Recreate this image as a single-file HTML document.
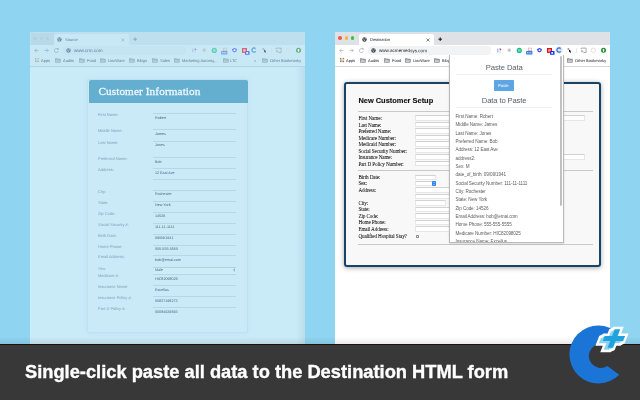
<!DOCTYPE html><html><head><meta charset='utf-8'><style>html,body{margin:0;padding:0;width:640px;height:400px;overflow:hidden;background:#8fd4f0;position:relative}.t{position:absolute;white-space:nowrap}.b{position:absolute;box-sizing:border-box}#root{position:absolute;left:0;top:0;width:640px;height:400px;overflow:hidden;will-change:transform;background:#8fd4f0}</style></head><body><div id='root'>
<div class='b' style='left:30.00px;top:32.00px;width:275.00px;height:312.00px;background:#c9eaf7'></div>
<div class='b' style='left:30.00px;top:32.00px;width:275.00px;height:13.00px;background:#bddfee'></div>
<div class='b' style='left:30.50px;top:32.50px;width:23.00px;height:12.50px;background:#b8d9e8;border-bottom-right-radius:2px'></div>
<div class='b' style='left:33.40px;top:36.55px;width:3.40px;height:3.40px;background:#b0d1df;border-radius:50%'></div>
<div class='b' style='left:39.80px;top:36.55px;width:3.40px;height:3.40px;background:#b0d1df;border-radius:50%'></div>
<div class='b' style='left:45.80px;top:36.55px;width:3.40px;height:3.40px;background:#b0d1df;border-radius:50%'></div>
<div class='b' style='left:53.50px;top:34.25px;width:75.50px;height:11.25px;background:#c8e8f5;border-radius:2px 2px 0 0'></div>
<svg class='b' style='left:57.30px;top:37.20px;' width='5' height='5' viewBox='0 0 5 5'><circle cx='2.5' cy='2.5' r='2.2' fill='#6f909e'/><path d='M1.2 1.6 Q2.6 2.2 2 3.2 Q3 3.6 3.4 4.3 M3.2 0.7 Q2.8 1.6 3.9 2' stroke='#c8e8f5' stroke-width='0.6' fill='none'/></svg>
<div class='t' style='left:65.00px;top:37.61px;font:normal 4.0px/4.0px "Liberation Sans",sans-serif;color:#5f808f;transform:rotate(0.25deg);transform-origin:0 0;'>Source</div>
<svg class='b' style='left:121.40px;top:37.50px;' width='4' height='4' viewBox='0 0 4 4'><path d='M0.5 0.5L3.5 3.5M3.5 0.5L0.5 3.5' stroke='#86a7b6' stroke-width='0.55'/></svg>
<svg class='b' style='left:133.30px;top:37.30px;' width='4.4' height='4.4' viewBox='0 0 4.4 4.4'><path d='M2.2 0.4V4M0.4 2.2H4' stroke='#86a7b6' stroke-width='0.9'/></svg>
<div class='b' style='left:30.00px;top:45.00px;width:275.00px;height:11.00px;background:#c8e8f5'></div>
<svg class='b' style='left:33.50px;top:48.30px;' width='5' height='5' viewBox='0 0 5 5'><path d='M4.5 2.5H0.8M2.5 0.7L0.7 2.5 2.5 4.3' stroke='#86a7b6' stroke-width='0.6' fill='none'/></svg>
<svg class='b' style='left:43.50px;top:48.30px;' width='5' height='5' viewBox='0 0 5 5'><path d='M0.5 2.5H4.2M2.5 0.7L4.3 2.5 2.5 4.3' stroke='#86a7b6' stroke-width='0.6' fill='none'/></svg>
<svg class='b' style='left:53.50px;top:48.00px;' width='5' height='5' viewBox='0 0 5 5'><path d='M4 1.5A2 2 0 1 0 4.3 3' stroke='#86a7b6' stroke-width='0.6' fill='none'/><path d='M3 0.6L4.4 0.6 4.4 2' stroke='#86a7b6' stroke-width='0.6' fill='none'/></svg>
<div class='b' style='left:63.10px;top:46.40px;width:122.90px;height:8.35px;background:#c4e4f2;border-radius:4px'></div>
<svg class='b' style='left:66.20px;top:48.20px;' width='5' height='5' viewBox='0 0 5 5'><circle cx='2.5' cy='2.5' r='2.2' fill='#6f909e'/><path d='M1.2 1.6 Q2.6 2.2 2 3.2 Q3 3.6 3.4 4.3 M3.2 0.7 Q2.8 1.6 3.9 2' stroke='#c4e4f2' stroke-width='0.6' fill='none'/></svg>
<div class='t' style='left:73.50px;top:49.21px;font:normal 4.6px/4.6px "Liberation Sans",sans-serif;color:#5f808f;transform:rotate(0.25deg);transform-origin:0 0;'>www.crm.com</div>
<div class='b' style='left:30.00px;top:56.00px;width:275.00px;height:10.00px;background:#c8e8f5'></div>
<div class='b' style='left:30.00px;top:66.00px;width:275.00px;height:0.60px;background:#b3d5e3'></div>
<svg class='b' style='left:34.50px;top:58.00px;' width='5' height='5' viewBox='0 0 5 5'><rect x='0.0' y='0.0' width='1.1' height='1.1' fill='#d9a0a8'/><rect x='1.5' y='0.0' width='1.1' height='1.1' fill='#d8cf90'/><rect x='3.0' y='0.0' width='1.1' height='1.1' fill='#8fc9a8'/><rect x='0.0' y='1.5' width='1.1' height='1.1' fill='#90b6e0'/><rect x='1.5' y='1.5' width='1.1' height='1.1' fill='#d9a0a8'/><rect x='3.0' y='1.5' width='1.1' height='1.1' fill='#d8cf90'/><rect x='0.0' y='3.0' width='1.1' height='1.1' fill='#8fc9a8'/><rect x='1.5' y='3.0' width='1.1' height='1.1' fill='#90b6e0'/><rect x='3.0' y='3.0' width='1.1' height='1.1' fill='#d9a0a8'/></svg>
<div class='t' style='left:41.20px;top:59.11px;font:normal 4.0px/4.0px "Liberation Sans",sans-serif;color:#5f808f;transform:rotate(0.25deg);transform-origin:0 0;'>Apps</div>
<svg class='b' style='left:55.00px;top:58.00px;' width='6' height='5' viewBox='0 0 6 5'><path d='M0.4 0.6H2.2L2.8 1.2H5.3V4.3H0.4Z' stroke='#86a7b6' stroke-width='0.6' fill='#b5d3df'/><path d='M0.4 1.9H5.3' stroke='#86a7b6' stroke-width='0.5'/></svg>
<div class='t' style='left:62.80px;top:59.11px;font:normal 4.0px/4.0px "Liberation Sans",sans-serif;color:#5f808f;transform:rotate(0.25deg);transform-origin:0 0;'>Audits</div>
<svg class='b' style='left:79.00px;top:58.00px;' width='6' height='5' viewBox='0 0 6 5'><path d='M0.4 0.6H2.2L2.8 1.2H5.3V4.3H0.4Z' stroke='#86a7b6' stroke-width='0.6' fill='#b5d3df'/><path d='M0.4 1.9H5.3' stroke='#86a7b6' stroke-width='0.5'/></svg>
<div class='t' style='left:86.80px;top:59.11px;font:normal 4.0px/4.0px "Liberation Sans",sans-serif;color:#5f808f;transform:rotate(0.25deg);transform-origin:0 0;'>Food</div>
<svg class='b' style='left:100.00px;top:58.00px;' width='6' height='5' viewBox='0 0 6 5'><path d='M0.4 0.6H2.2L2.8 1.2H5.3V4.3H0.4Z' stroke='#86a7b6' stroke-width='0.6' fill='#b5d3df'/><path d='M0.4 1.9H5.3' stroke='#86a7b6' stroke-width='0.5'/></svg>
<div class='t' style='left:107.90px;top:59.11px;font:normal 4.0px/4.0px "Liberation Sans",sans-serif;color:#5f808f;transform:rotate(0.25deg);transform-origin:0 0;'>LincWare</div>
<svg class='b' style='left:129.40px;top:58.00px;' width='6' height='5' viewBox='0 0 6 5'><path d='M0.4 0.6H2.2L2.8 1.2H5.3V4.3H0.4Z' stroke='#86a7b6' stroke-width='0.6' fill='#b5d3df'/><path d='M0.4 1.9H5.3' stroke='#86a7b6' stroke-width='0.5'/></svg>
<div class='t' style='left:137.00px;top:59.11px;font:normal 4.0px/4.0px "Liberation Sans",sans-serif;color:#5f808f;transform:rotate(0.25deg);transform-origin:0 0;'>Blogs</div>
<svg class='b' style='left:152.10px;top:58.00px;' width='6' height='5' viewBox='0 0 6 5'><path d='M0.4 0.6H2.2L2.8 1.2H5.3V4.3H0.4Z' stroke='#86a7b6' stroke-width='0.6' fill='#b5d3df'/><path d='M0.4 1.9H5.3' stroke='#86a7b6' stroke-width='0.5'/></svg>
<div class='t' style='left:160.00px;top:59.11px;font:normal 4.0px/4.0px "Liberation Sans",sans-serif;color:#5f808f;transform:rotate(0.25deg);transform-origin:0 0;'>Sales</div>
<svg class='b' style='left:174.20px;top:58.00px;' width='6' height='5' viewBox='0 0 6 5'><path d='M0.4 0.6H2.2L2.8 1.2H5.3V4.3H0.4Z' stroke='#86a7b6' stroke-width='0.6' fill='#b5d3df'/><path d='M0.4 1.9H5.3' stroke='#86a7b6' stroke-width='0.5'/></svg>
<div class='t' style='left:181.90px;top:59.11px;font:normal 4.0px/4.0px "Liberation Sans",sans-serif;color:#5f808f;transform:rotate(0.25deg);transform-origin:0 0;'>Marketing Automa...</div>
<svg class='b' style='left:222.70px;top:58.00px;' width='6' height='5' viewBox='0 0 6 5'><path d='M0.4 0.6H2.2L2.8 1.2H5.3V4.3H0.4Z' stroke='#86a7b6' stroke-width='0.6' fill='#b5d3df'/><path d='M0.4 1.9H5.3' stroke='#86a7b6' stroke-width='0.5'/></svg>
<div class='t' style='left:229.80px;top:59.11px;font:normal 4.0px/4.0px "Liberation Sans",sans-serif;color:#5f808f;transform:rotate(0.25deg);transform-origin:0 0;'>LTC</div>
<div class='t' style='left:253.80px;top:59.11px;font:normal 4.0px/4.0px "Liberation Sans",sans-serif;color:#5f808f;transform:rotate(0.25deg);transform-origin:0 0;'>»</div>
<svg class='b' style='left:262.30px;top:58.00px;' width='6' height='5' viewBox='0 0 6 5'><path d='M0.4 0.6H2.2L2.8 1.2H5.3V4.3H0.4Z' stroke='#86a7b6' stroke-width='0.6' fill='#b5d3df'/><path d='M0.4 1.9H5.3' stroke='#86a7b6' stroke-width='0.5'/></svg>
<div class='t' style='left:269.80px;top:59.11px;font:normal 4.0px/4.0px "Liberation Sans",sans-serif;color:#5f808f;transform:rotate(0.25deg);transform-origin:0 0;'>Other Bookmarks</div>
<svg class='b' style='left:188.00px;top:44.00px;' width='117' height='13' viewBox='0 0 117 13'><rect x='4' y='4.600000000000001' width='1.5' height='3.8' rx='0.6' fill='#aed2f3'/><circle cx='7.400000000000006' cy='5.399999999999999' r='0.85' fill='#cf7cab'/><path d='M5.800000000000011 4.100000000000001L7 4.899999999999999' stroke='#e0bdd5' stroke-width='0.6'/><rect x='6.199999999999989' y='7.600000000000001' width='1.8' height='0.9' fill='#a6e7de'/><path d='M16.19999999999999 4.200000000000003V8.200000000000003M14.449999999999989 5.200000000000003L17.94999999999999 7.200000000000003M14.449999999999989 7.200000000000003L17.94999999999999 5.200000000000003' stroke='#acb9be' stroke-width='0.55'/><circle cx='26.30000000000001' cy='6.399999999999999' r='2.6' fill='#5fcfb5'/><path d='M25.00000000000001 5.899999999999999H27.600000000000012M25.00000000000001 6.999999999999998H27.600000000000012' stroke='#fff' stroke-width='0.5'/><rect x='35.19999999999999' y='4.100000000000001' width='3.3' height='2.6' stroke='#dfb0b5' stroke-width='0.6' fill='none'/><rect x='33.099999999999994' y='7' width='6.3' height='3.5' rx='0.4' fill='#6aa8ea'/><path d='M34 8.799999999999997H38.5' stroke='#fff' stroke-width='0.8' stroke-dasharray='1.2 0.4'/><path d='M46.5 3.9999999999999973L48.9 5.099999999999997L48.5 7.299999999999997L46.5 8.499999999999996L44.5 7.299999999999997L44.1 5.099999999999997Z' fill='#6a83ed'/><circle cx='46.5' cy='6.299999999999997' r='1' fill='#fff'/><rect x='54' y='4' width='5' height='4.9' fill='#d9666b'/><rect x='55.19999999999999' y='5.200000000000003' width='2.6' height='2.5' fill='#e2bdc2'/><rect x='57' y='7' width='4.5' height='3.8' rx='0.4' fill='#6178ed'/><rect x='58.30000000000001' y='8.100000000000001' width='1.8' height='1.6' fill='#fff'/><path d='M67.6 4.700000000000001A2.1 2.1 0 1 0 67.7 7.300000000000002' stroke='#609fe8' stroke-width='1.2' fill='none'/><circle cx='67.7' cy='5.100000000000001' r='0.6' fill='#70d5f1'/><circle cx='75.4' cy='5' r='1' fill='#acb9be'/><path d='M75.9 5.5L78.30000000000001 7.200000000000003L77.30000000000001 7.5L78 8.600000000000001L77.5 8.899999999999999L76.80000000000001 7.799999999999997L76.19999999999999 8.399999999999999Z' fill='#505d62'/><rect x='83.30000000000001' y='4' width='0.5' height='5' fill='#cddadf'/><path d='M88.1 5.299999999999997V4.099999999999997H93.1V8.499999999999996H90.89999999999999' stroke='#909ca2' stroke-width='0.55' fill='none'/><path d='M88.1 6.299999999999997A2.2 2.2 0 0 1 90.3 8.499999999999996M88.1 7.399999999999997A1.1 1.1 0 0 1 89.19999999999999 8.499999999999996' stroke='#909ca2' stroke-width='0.5' fill='none'/><circle cx='100.30000000000001' cy='6.299999999999997' r='2.2' stroke='#d2dee4' stroke-width='0.8' fill='none'/><circle cx='110.5' cy='6.299999999999997' r='2.5' fill='#60b080'/><path d='M110.5 4.6999999999999975L112.0 6.299999999999997H111.05V7.799999999999997H109.95V6.299999999999997H109.0Z' fill='#fff'/></svg>
<div class='b' style='left:296.00px;top:66.60px;width:9.00px;height:277.40px;background:linear-gradient(to right,rgba(0,60,90,0),rgba(0,60,90,0.075))'></div>
<div class='b' style='left:86.80px;top:79.00px;width:161.60px;height:254.00px;background:#caeaf7;border:0.7px solid #c0e0ee;border-radius:2.5px;box-shadow:0 0 4px rgba(120,170,195,0.10)'></div>
<div class='b' style='left:89.00px;top:80.00px;width:159.00px;height:22.50px;background:#64aecf;border-radius:2px 2px 0 0'></div>
<div class='t' style='left:98.40px;top:85.62px;font:normal 11.2px/11.2px "Liberation Serif",serif;color:#eef8fc;letter-spacing:0.12px;-webkit-text-stroke:0.3px #eef8fc'>Customer Information</div>
<div class='t' style='left:98.00px;top:113.36px;font:normal 4.0px/4.0px "Liberation Sans",sans-serif;color:#7ea3b4;transform:rotate(0.25deg);transform-origin:0 0;'>First Name:</div>
<div class='b' style='left:153.00px;top:113.45px;width:82.50px;height:0.60px;background:#b7d7e4'></div>
<div class='t' style='left:155.00px;top:117.12px;font:normal 3.7px/3.7px "Liberation Sans",sans-serif;color:#45687b;transform:rotate(0.25deg);transform-origin:0 0;'>Robert</div>
<div class='t' style='left:98.00px;top:129.36px;font:normal 4.0px/4.0px "Liberation Sans",sans-serif;color:#7ea3b4;transform:rotate(0.25deg);transform-origin:0 0;'>Middle Name:</div>
<div class='b' style='left:153.00px;top:129.45px;width:82.50px;height:0.60px;background:#b7d7e4'></div>
<div class='t' style='left:155.00px;top:133.12px;font:normal 3.7px/3.7px "Liberation Sans",sans-serif;color:#45687b;transform:rotate(0.25deg);transform-origin:0 0;'>James</div>
<div class='t' style='left:98.00px;top:140.61px;font:normal 4.0px/4.0px "Liberation Sans",sans-serif;color:#7ea3b4;transform:rotate(0.25deg);transform-origin:0 0;'>Last Name:</div>
<div class='b' style='left:153.00px;top:140.70px;width:82.50px;height:0.60px;background:#b7d7e4'></div>
<div class='t' style='left:155.00px;top:144.37px;font:normal 3.7px/3.7px "Liberation Sans",sans-serif;color:#45687b;transform:rotate(0.25deg);transform-origin:0 0;'>Jones</div>
<div class='t' style='left:98.00px;top:157.11px;font:normal 4.0px/4.0px "Liberation Sans",sans-serif;color:#7ea3b4;transform:rotate(0.25deg);transform-origin:0 0;'>Preferred Name:</div>
<div class='b' style='left:153.00px;top:157.20px;width:82.50px;height:0.60px;background:#b7d7e4'></div>
<div class='t' style='left:155.00px;top:160.87px;font:normal 3.7px/3.7px "Liberation Sans",sans-serif;color:#45687b;transform:rotate(0.25deg);transform-origin:0 0;'>Bob</div>
<div class='t' style='left:98.00px;top:168.11px;font:normal 4.0px/4.0px "Liberation Sans",sans-serif;color:#7ea3b4;transform:rotate(0.25deg);transform-origin:0 0;'>Address:</div>
<div class='b' style='left:153.00px;top:168.20px;width:82.50px;height:0.60px;background:#b7d7e4'></div>
<div class='t' style='left:155.00px;top:171.87px;font:normal 3.7px/3.7px "Liberation Sans",sans-serif;color:#45687b;transform:rotate(0.25deg);transform-origin:0 0;'>12 East Ave</div>
<div class='b' style='left:153.00px;top:179.45px;width:82.50px;height:0.60px;background:#b7d7e4'></div>
<div class='t' style='left:98.00px;top:189.61px;font:normal 4.0px/4.0px "Liberation Sans",sans-serif;color:#7ea3b4;transform:rotate(0.25deg);transform-origin:0 0;'>City:</div>
<div class='b' style='left:153.00px;top:189.70px;width:82.50px;height:0.60px;background:#b7d7e4'></div>
<div class='t' style='left:155.00px;top:193.37px;font:normal 3.7px/3.7px "Liberation Sans",sans-serif;color:#45687b;transform:rotate(0.25deg);transform-origin:0 0;'>Rochester</div>
<div class='t' style='left:98.00px;top:200.61px;font:normal 4.0px/4.0px "Liberation Sans",sans-serif;color:#7ea3b4;transform:rotate(0.25deg);transform-origin:0 0;'>State:</div>
<div class='b' style='left:153.00px;top:200.70px;width:82.50px;height:0.60px;background:#b7d7e4'></div>
<div class='t' style='left:155.00px;top:204.37px;font:normal 3.7px/3.7px "Liberation Sans",sans-serif;color:#45687b;transform:rotate(0.25deg);transform-origin:0 0;'>New York</div>
<div class='t' style='left:98.00px;top:211.61px;font:normal 4.0px/4.0px "Liberation Sans",sans-serif;color:#7ea3b4;transform:rotate(0.25deg);transform-origin:0 0;'>Zip Code:</div>
<div class='b' style='left:153.00px;top:211.70px;width:82.50px;height:0.60px;background:#b7d7e4'></div>
<div class='t' style='left:155.00px;top:215.37px;font:normal 3.7px/3.7px "Liberation Sans",sans-serif;color:#45687b;transform:rotate(0.25deg);transform-origin:0 0;'>14526</div>
<div class='t' style='left:98.00px;top:222.61px;font:normal 4.0px/4.0px "Liberation Sans",sans-serif;color:#7ea3b4;transform:rotate(0.25deg);transform-origin:0 0;'>Social Security #:</div>
<div class='b' style='left:153.00px;top:222.70px;width:82.50px;height:0.60px;background:#b7d7e4'></div>
<div class='t' style='left:155.00px;top:226.37px;font:normal 3.7px/3.7px "Liberation Sans",sans-serif;color:#45687b;transform:rotate(0.25deg);transform-origin:0 0;'>111-11-1111</div>
<div class='t' style='left:98.00px;top:233.61px;font:normal 4.0px/4.0px "Liberation Sans",sans-serif;color:#7ea3b4;transform:rotate(0.25deg);transform-origin:0 0;'>Birth Date:</div>
<div class='b' style='left:153.00px;top:233.70px;width:82.50px;height:0.60px;background:#b7d7e4'></div>
<div class='t' style='left:155.00px;top:237.37px;font:normal 3.7px/3.7px "Liberation Sans",sans-serif;color:#45687b;transform:rotate(0.25deg);transform-origin:0 0;'>09/09/1941</div>
<div class='t' style='left:98.00px;top:244.61px;font:normal 4.0px/4.0px "Liberation Sans",sans-serif;color:#7ea3b4;transform:rotate(0.25deg);transform-origin:0 0;'>Home Phone:</div>
<div class='b' style='left:153.00px;top:244.70px;width:82.50px;height:0.60px;background:#b7d7e4'></div>
<div class='t' style='left:155.00px;top:248.37px;font:normal 3.7px/3.7px "Liberation Sans",sans-serif;color:#45687b;transform:rotate(0.25deg);transform-origin:0 0;'>555-555-5555</div>
<div class='t' style='left:98.00px;top:255.11px;font:normal 4.0px/4.0px "Liberation Sans",sans-serif;color:#7ea3b4;transform:rotate(0.25deg);transform-origin:0 0;'>Email Address:</div>
<div class='b' style='left:153.00px;top:255.20px;width:82.50px;height:0.60px;background:#b7d7e4'></div>
<div class='t' style='left:155.00px;top:258.87px;font:normal 3.7px/3.7px "Liberation Sans",sans-serif;color:#45687b;transform:rotate(0.25deg);transform-origin:0 0;'>bob@emai.com</div>
<div class='t' style='left:98.00px;top:266.81px;font:normal 4.0px/4.0px "Liberation Sans",sans-serif;color:#7ea3b4;transform:rotate(0.25deg);transform-origin:0 0;'>Sex:</div>
<div class='b' style='left:153.00px;top:266.60px;width:82.50px;height:7.60px;border-top:0.6px solid #b2d2df;background:#cdedf9'></div>
<div class='t' style='left:155.00px;top:269.07px;font:normal 3.7px/3.7px "Liberation Sans",sans-serif;color:#45687b;transform:rotate(0.25deg);transform-origin:0 0;'>Male</div>
<svg class='b' style='left:232.60px;top:267.60px;' width='2.5' height='4' viewBox='0 0 2.5 4'><path d='M0.4 1.4L1.2 0.4 2 1.4ZM0.4 2.6L1.2 3.6 2 2.6Z' fill='#4a6676'/></svg>
<div class='t' style='left:98.00px;top:274.11px;font:normal 4.0px/4.0px "Liberation Sans",sans-serif;color:#7ea3b4;transform:rotate(0.25deg);transform-origin:0 0;'>Medicare #:</div>
<div class='b' style='left:153.00px;top:274.20px;width:82.50px;height:0.60px;background:#b7d7e4'></div>
<div class='t' style='left:155.00px;top:277.87px;font:normal 3.7px/3.7px "Liberation Sans",sans-serif;color:#45687b;transform:rotate(0.25deg);transform-origin:0 0;'>HIC82098025</div>
<div class='t' style='left:98.00px;top:285.11px;font:normal 4.0px/4.0px "Liberation Sans",sans-serif;color:#7ea3b4;transform:rotate(0.25deg);transform-origin:0 0;'>Insurance Name:</div>
<div class='b' style='left:153.00px;top:285.20px;width:82.50px;height:0.60px;background:#b7d7e4'></div>
<div class='t' style='left:155.00px;top:288.87px;font:normal 3.7px/3.7px "Liberation Sans",sans-serif;color:#45687b;transform:rotate(0.25deg);transform-origin:0 0;'>Excellus</div>
<div class='t' style='left:98.00px;top:295.86px;font:normal 4.0px/4.0px "Liberation Sans",sans-serif;color:#7ea3b4;transform:rotate(0.25deg);transform-origin:0 0;'>Insurance Policy #:</div>
<div class='b' style='left:153.00px;top:295.95px;width:82.50px;height:0.60px;background:#b7d7e4'></div>
<div class='t' style='left:155.00px;top:299.62px;font:normal 3.7px/3.7px "Liberation Sans",sans-serif;color:#45687b;transform:rotate(0.25deg);transform-origin:0 0;'>05827198273</div>
<div class='t' style='left:98.00px;top:306.86px;font:normal 4.0px/4.0px "Liberation Sans",sans-serif;color:#7ea3b4;transform:rotate(0.25deg);transform-origin:0 0;'>Part D Policy #:</div>
<div class='b' style='left:153.00px;top:306.95px;width:82.50px;height:0.60px;background:#b7d7e4'></div>
<div class='t' style='left:155.00px;top:310.62px;font:normal 3.7px/3.7px "Liberation Sans",sans-serif;color:#45687b;transform:rotate(0.25deg);transform-origin:0 0;'>00084029845</div>
<div class='b' style='left:335.00px;top:32.00px;width:275.00px;height:312.00px;background:#ffffff'></div>
<div class='b' style='left:335.00px;top:32.00px;width:275.00px;height:13.00px;background:#dee1e6'></div>
<div class='b' style='left:338.30px;top:36.45px;width:3.60px;height:3.60px;background:#ee5b53;border-radius:50%'></div>
<div class='b' style='left:344.70px;top:36.45px;width:3.60px;height:3.60px;background:#f5b63c;border-radius:50%'></div>
<div class='b' style='left:350.70px;top:36.45px;width:3.60px;height:3.60px;background:#39c043;border-radius:50%'></div>
<div class='b' style='left:358.50px;top:34.25px;width:75.50px;height:11.25px;background:#ffffff;border-radius:2px 2px 0 0'></div>
<svg class='b' style='left:362.30px;top:37.20px;' width='5' height='5' viewBox='0 0 5 5'><circle cx='2.5' cy='2.5' r='2.2' fill='#3c4043'/><path d='M1.2 1.6 Q2.6 2.2 2 3.2 Q3 3.6 3.4 4.3 M3.2 0.7 Q2.8 1.6 3.9 2' stroke='#ffffff' stroke-width='0.6' fill='none'/></svg>
<div class='t' style='left:370.00px;top:37.61px;font:normal 4.0px/4.0px "Liberation Sans",sans-serif;color:#202124;transform:rotate(0.25deg);transform-origin:0 0;'>Destination</div>
<svg class='b' style='left:426.40px;top:37.50px;' width='4' height='4' viewBox='0 0 4 4'><path d='M0.5 0.5L3.5 3.5M3.5 0.5L0.5 3.5' stroke='#202124' stroke-width='0.55'/></svg>
<svg class='b' style='left:438.30px;top:37.30px;' width='4.4' height='4.4' viewBox='0 0 4.4 4.4'><path d='M2.2 0.4V4M0.4 2.2H4' stroke='#000' stroke-width='0.9'/></svg>
<div class='b' style='left:335.00px;top:45.00px;width:275.00px;height:11.00px;background:#ffffff'></div>
<svg class='b' style='left:338.50px;top:48.30px;' width='5' height='5' viewBox='0 0 5 5'><path d='M4.5 2.5H0.8M2.5 0.7L0.7 2.5 2.5 4.3' stroke='#9aa0a6' stroke-width='0.6' fill='none'/></svg>
<svg class='b' style='left:348.50px;top:48.30px;' width='5' height='5' viewBox='0 0 5 5'><path d='M0.5 2.5H4.2M2.5 0.7L4.3 2.5 2.5 4.3' stroke='#9aa0a6' stroke-width='0.6' fill='none'/></svg>
<svg class='b' style='left:358.50px;top:48.00px;' width='5' height='5' viewBox='0 0 5 5'><path d='M4 1.5A2 2 0 1 0 4.3 3' stroke='#9aa0a6' stroke-width='0.6' fill='none'/><path d='M3 0.6L4.4 0.6 4.4 2' stroke='#9aa0a6' stroke-width='0.6' fill='none'/></svg>
<div class='b' style='left:368.10px;top:46.40px;width:122.90px;height:8.35px;background:#f1f3f4;border-radius:4px'></div>
<svg class='b' style='left:371.20px;top:48.20px;' width='5' height='5' viewBox='0 0 5 5'><circle cx='2.5' cy='2.5' r='2.2' fill='#3c4043'/><path d='M1.2 1.6 Q2.6 2.2 2 3.2 Q3 3.6 3.4 4.3 M3.2 0.7 Q2.8 1.6 3.9 2' stroke='#f1f3f4' stroke-width='0.6' fill='none'/></svg>
<div class='t' style='left:378.50px;top:49.21px;font:normal 4.6px/4.6px "Liberation Sans",sans-serif;color:#202124;transform:rotate(0.25deg);transform-origin:0 0;'>www.acmemedsys.com</div>
<div class='b' style='left:335.00px;top:56.00px;width:275.00px;height:10.00px;background:#ffffff'></div>
<div class='b' style='left:335.00px;top:66.00px;width:275.00px;height:0.60px;background:#d5d7da'></div>
<svg class='b' style='left:339.50px;top:58.00px;' width='5' height='5' viewBox='0 0 5 5'><rect x='0.0' y='0.0' width='1.1' height='1.1' fill='#ea4335'/><rect x='1.5' y='0.0' width='1.1' height='1.1' fill='#fbbc04'/><rect x='3.0' y='0.0' width='1.1' height='1.1' fill='#34a853'/><rect x='0.0' y='1.5' width='1.1' height='1.1' fill='#4285f4'/><rect x='1.5' y='1.5' width='1.1' height='1.1' fill='#ea4335'/><rect x='3.0' y='1.5' width='1.1' height='1.1' fill='#fbbc04'/><rect x='0.0' y='3.0' width='1.1' height='1.1' fill='#34a853'/><rect x='1.5' y='3.0' width='1.1' height='1.1' fill='#4285f4'/><rect x='3.0' y='3.0' width='1.1' height='1.1' fill='#ea4335'/></svg>
<div class='t' style='left:346.20px;top:59.11px;font:normal 4.0px/4.0px "Liberation Sans",sans-serif;color:#202124;transform:rotate(0.25deg);transform-origin:0 0;'>Apps</div>
<svg class='b' style='left:360.00px;top:58.00px;' width='6' height='5' viewBox='0 0 6 5'><path d='M0.4 0.6H2.2L2.8 1.2H5.3V4.3H0.4Z' stroke='#5f6368' stroke-width='0.6' fill='#dadce0'/><path d='M0.4 1.9H5.3' stroke='#5f6368' stroke-width='0.5'/></svg>
<div class='t' style='left:367.50px;top:59.11px;font:normal 4.0px/4.0px "Liberation Sans",sans-serif;color:#202124;transform:rotate(0.25deg);transform-origin:0 0;'>Audits</div>
<svg class='b' style='left:384.00px;top:58.00px;' width='6' height='5' viewBox='0 0 6 5'><path d='M0.4 0.6H2.2L2.8 1.2H5.3V4.3H0.4Z' stroke='#5f6368' stroke-width='0.6' fill='#dadce0'/><path d='M0.4 1.9H5.3' stroke='#5f6368' stroke-width='0.5'/></svg>
<div class='t' style='left:391.50px;top:59.11px;font:normal 4.0px/4.0px "Liberation Sans",sans-serif;color:#202124;transform:rotate(0.25deg);transform-origin:0 0;'>Food</div>
<svg class='b' style='left:405.00px;top:58.00px;' width='6' height='5' viewBox='0 0 6 5'><path d='M0.4 0.6H2.2L2.8 1.2H5.3V4.3H0.4Z' stroke='#5f6368' stroke-width='0.6' fill='#dadce0'/><path d='M0.4 1.9H5.3' stroke='#5f6368' stroke-width='0.5'/></svg>
<div class='t' style='left:412.75px;top:59.11px;font:normal 4.0px/4.0px "Liberation Sans",sans-serif;color:#202124;transform:rotate(0.25deg);transform-origin:0 0;'>LincWare</div>
<svg class='b' style='left:434.00px;top:58.00px;' width='6' height='5' viewBox='0 0 6 5'><path d='M0.4 0.6H2.2L2.8 1.2H5.3V4.3H0.4Z' stroke='#5f6368' stroke-width='0.6' fill='#dadce0'/><path d='M0.4 1.9H5.3' stroke='#5f6368' stroke-width='0.5'/></svg>
<div class='t' style='left:442.00px;top:59.11px;font:normal 4.0px/4.0px "Liberation Sans",sans-serif;color:#202124;transform:rotate(0.25deg);transform-origin:0 0;'>Blogs</div>
<svg class='b' style='left:567.30px;top:58.00px;' width='6' height='5' viewBox='0 0 6 5'><path d='M0.4 0.6H2.2L2.8 1.2H5.3V4.3H0.4Z' stroke='#5f6368' stroke-width='0.6' fill='#dadce0'/><path d='M0.4 1.9H5.3' stroke='#5f6368' stroke-width='0.5'/></svg>
<div class='t' style='left:574.80px;top:59.11px;font:normal 4.0px/4.0px "Liberation Sans",sans-serif;color:#202124;transform:rotate(0.25deg);transform-origin:0 0;'>Other Bookmarks</div>
<svg class='b' style='left:493.00px;top:44.00px;' width='117' height='13' viewBox='0 0 117 13'><rect x='4' y='4.600000000000001' width='1.5' height='3.8' rx='0.6' fill='#9cc3f2'/><circle cx='7.400000000000006' cy='5.399999999999999' r='0.85' fill='#d3347a'/><path d='M5.800000000000011 4.100000000000001L7 4.899999999999999' stroke='#f0a0c0' stroke-width='0.6'/><rect x='6.199999999999989' y='7.600000000000001' width='1.8' height='0.9' fill='#8fe6cf'/><path d='M16.19999999999999 4.200000000000003V8.200000000000003M14.449999999999989 5.200000000000003L17.94999999999999 7.200000000000003M14.449999999999989 7.200000000000003L17.94999999999999 5.200000000000003' stroke='#9a9a9a' stroke-width='0.55'/><circle cx='26.30000000000001' cy='6.399999999999999' r='2.6' fill='#19bf8b'/><path d='M25.00000000000001 5.899999999999999H27.600000000000012M25.00000000000001 6.999999999999998H27.600000000000012' stroke='#fff' stroke-width='0.5'/><rect x='35.19999999999999' y='4.100000000000001' width='3.3' height='2.6' stroke='#ee8a8a' stroke-width='0.6' fill='none'/><rect x='33.099999999999994' y='7' width='6.3' height='3.5' rx='0.4' fill='#2b7de2'/><path d='M34 8.799999999999997H38.5' stroke='#fff' stroke-width='0.8' stroke-dasharray='1.2 0.4'/><path d='M46.5 3.9999999999999973L48.9 5.099999999999997L48.5 7.299999999999997L46.5 8.499999999999996L44.5 7.299999999999997L44.1 5.099999999999997Z' fill='#2c40e8'/><circle cx='46.5' cy='6.299999999999997' r='1' fill='#fff'/><rect x='54' y='4' width='5' height='4.9' fill='#e40f0f'/><rect x='55.19999999999999' y='5.200000000000003' width='2.6' height='2.5' fill='#f4a0a0'/><rect x='57' y='7' width='4.5' height='3.8' rx='0.4' fill='#1d2ee8'/><rect x='58.30000000000001' y='8.100000000000001' width='1.8' height='1.6' fill='#fff'/><circle cx='66' cy='6.100000000000001' r='3.7' fill='#e6e6e8'/><path d='M67.6 4.700000000000001A2.1 2.1 0 1 0 67.7 7.300000000000002' stroke='#1b6fe0' stroke-width='1.2' fill='none'/><circle cx='67.7' cy='5.100000000000001' r='0.6' fill='#36c8ef'/><circle cx='75.4' cy='5' r='1' fill='#9a9a9a'/><path d='M75.9 5.5L78.30000000000001 7.200000000000003L77.30000000000001 7.5L78 8.600000000000001L77.5 8.899999999999999L76.80000000000001 7.799999999999997L76.19999999999999 8.399999999999999Z' fill='#000000'/><rect x='83.30000000000001' y='4' width='0.5' height='5' fill='#d0d0d0'/><path d='M88.1 5.299999999999997V4.099999999999997H93.1V8.499999999999996H90.89999999999999' stroke='#6a6a6a' stroke-width='0.55' fill='none'/><path d='M88.1 6.299999999999997A2.2 2.2 0 0 1 90.3 8.499999999999996M88.1 7.399999999999997A1.1 1.1 0 0 1 89.19999999999999 8.499999999999996' stroke='#6a6a6a' stroke-width='0.5' fill='none'/><circle cx='100.30000000000001' cy='6.299999999999997' r='2.2' stroke='#d8d8d8' stroke-width='0.8' fill='none'/><circle cx='110.5' cy='6.299999999999997' r='2.5' fill='#1a8a32'/><path d='M110.5 4.6999999999999975L112.0 6.299999999999997H111.05V7.799999999999997H109.95V6.299999999999997H109.0Z' fill='#fff'/></svg>
<div class='b' style='left:344.00px;top:82.00px;width:257.00px;height:184.50px;background:#f8f8f8;border:2px solid #17456a;border-radius:3px;box-shadow:0 1px 5px rgba(0,0,0,0.35)'></div>
<div class='t' style='left:358.40px;top:96.89px;font:bold 7.45px/7.45px "Liberation Sans",sans-serif;color:#111;-webkit-text-stroke:0.12px #111'>New Customer Setup</div>
<div class='b' style='left:358.00px;top:110.90px;width:235.00px;height:0.70px;background:#c9c9c9'></div>
<div class='t' style='left:358.40px;top:116.05px;font:normal 5.2px/5.2px "Liberation Serif",serif;color:#151515;-webkit-text-stroke:0.05px #151515;letter-spacing:-0.12px'>First Name:</div>
<div class='b' style='left:415.20px;top:115.40px;width:170.30px;height:5.60px;background:#fff;border:0.5px solid #e6e6e6;border-top:0.9px solid #d2d2d2'></div>
<div class='t' style='left:358.40px;top:122.55px;font:normal 5.2px/5.2px "Liberation Serif",serif;color:#151515;-webkit-text-stroke:0.05px #151515;letter-spacing:-0.12px'>Last Name:</div>
<div class='b' style='left:415.20px;top:121.90px;width:124.80px;height:5.60px;background:#fff;border:0.5px solid #e6e6e6;border-top:0.9px solid #d2d2d2'></div>
<div class='t' style='left:358.40px;top:129.05px;font:normal 5.2px/5.2px "Liberation Serif",serif;color:#151515;-webkit-text-stroke:0.05px #151515;letter-spacing:-0.12px'>Preferred Name:</div>
<div class='b' style='left:415.20px;top:128.40px;width:124.80px;height:5.60px;background:#fff;border:0.5px solid #e6e6e6;border-top:0.9px solid #d2d2d2'></div>
<div class='t' style='left:358.40px;top:135.55px;font:normal 5.2px/5.2px "Liberation Serif",serif;color:#151515;-webkit-text-stroke:0.05px #151515;letter-spacing:-0.12px'>Medicare Number:</div>
<div class='b' style='left:415.20px;top:134.90px;width:124.80px;height:5.60px;background:#fff;border:0.5px solid #e6e6e6;border-top:0.9px solid #d2d2d2'></div>
<div class='t' style='left:358.40px;top:142.05px;font:normal 5.2px/5.2px "Liberation Serif",serif;color:#151515;-webkit-text-stroke:0.05px #151515;letter-spacing:-0.12px'>Medicaid Number:</div>
<div class='b' style='left:415.20px;top:141.40px;width:124.80px;height:5.60px;background:#fff;border:0.5px solid #e6e6e6;border-top:0.9px solid #d2d2d2'></div>
<div class='t' style='left:358.40px;top:148.55px;font:normal 5.2px/5.2px "Liberation Serif",serif;color:#151515;-webkit-text-stroke:0.05px #151515;letter-spacing:-0.12px'>Social Security Number:</div>
<div class='b' style='left:415.20px;top:147.90px;width:124.80px;height:5.60px;background:#fff;border:0.5px solid #e6e6e6;border-top:0.9px solid #d2d2d2'></div>
<div class='t' style='left:358.40px;top:155.05px;font:normal 5.2px/5.2px "Liberation Serif",serif;color:#151515;-webkit-text-stroke:0.05px #151515;letter-spacing:-0.12px'>Insurance Name:</div>
<div class='b' style='left:415.20px;top:154.40px;width:170.30px;height:5.60px;background:#fff;border:0.5px solid #e6e6e6;border-top:0.9px solid #d2d2d2'></div>
<div class='t' style='left:358.40px;top:161.55px;font:normal 5.2px/5.2px "Liberation Serif",serif;color:#151515;-webkit-text-stroke:0.05px #151515;letter-spacing:-0.12px'>Part D Policy Number:</div>
<div class='b' style='left:415.20px;top:160.90px;width:124.80px;height:5.60px;background:#fff;border:0.5px solid #e6e6e6;border-top:0.9px solid #d2d2d2'></div>
<div class='b' style='left:358.00px;top:169.90px;width:235.00px;height:0.70px;background:#c9c9c9'></div>
<div class='t' style='left:358.40px;top:175.15px;font:normal 5.2px/5.2px "Liberation Serif",serif;color:#151515;-webkit-text-stroke:0.05px #151515;letter-spacing:-0.12px'>Birth Date:</div>
<div class='b' style='left:415.20px;top:174.50px;width:21.30px;height:5.60px;background:#fff;border:0.5px solid #e6e6e6;border-top:0.9px solid #d2d2d2'></div>
<div class='t' style='left:358.40px;top:181.45px;font:normal 5.2px/5.2px "Liberation Serif",serif;color:#151515;-webkit-text-stroke:0.05px #151515;letter-spacing:-0.12px'>Sex:</div>
<div class='b' style='left:415.20px;top:180.80px;width:21.00px;height:5.60px;background:#fff;border:0.5px solid #e6e6e6;border-top:0.9px solid #d2d2d2'></div>
<div class='b' style='left:432.10px;top:181.00px;width:3.90px;height:5.30px;background:#2f86f2;border-radius:0.9px'></div>
<svg class='b' style='left:432.10px;top:181.00px;' width='4' height='5.3' viewBox='0 0 4 5.3'><path d='M1.2 2.1L2 1.2 2.8 2.1ZM1.2 3.2L2 4.1 2.8 3.2Z' fill='#fff'/></svg>
<div class='t' style='left:358.40px;top:187.65px;font:normal 5.2px/5.2px "Liberation Serif",serif;color:#151515;-webkit-text-stroke:0.05px #151515;letter-spacing:-0.12px'>Address:</div>
<div class='b' style='left:415.20px;top:187.00px;width:124.80px;height:5.60px;background:#fff;border:0.5px solid #e6e6e6;border-top:0.9px solid #d2d2d2'></div>
<div class='b' style='left:415.20px;top:193.60px;width:124.80px;height:5.60px;background:#fff;border:0.5px solid #e6e6e6;border-top:0.9px solid #d2d2d2'></div>
<div class='t' style='left:358.40px;top:201.05px;font:normal 5.2px/5.2px "Liberation Serif",serif;color:#151515;-webkit-text-stroke:0.05px #151515;letter-spacing:-0.12px'>City:</div>
<div class='b' style='left:415.20px;top:200.40px;width:31.00px;height:5.60px;background:#fff;border:0.5px solid #e6e6e6;border-top:0.9px solid #d2d2d2'></div>
<div class='t' style='left:358.40px;top:207.34px;font:normal 5.2px/5.2px "Liberation Serif",serif;color:#151515;-webkit-text-stroke:0.05px #151515;letter-spacing:-0.12px'>State:</div>
<div class='b' style='left:415.20px;top:206.70px;width:124.80px;height:5.60px;background:#fff;border:0.5px solid #e6e6e6;border-top:0.9px solid #d2d2d2'></div>
<div class='t' style='left:358.40px;top:214.05px;font:normal 5.2px/5.2px "Liberation Serif",serif;color:#151515;-webkit-text-stroke:0.05px #151515;letter-spacing:-0.12px'>Zip Code:</div>
<div class='b' style='left:415.20px;top:213.40px;width:124.80px;height:5.60px;background:#fff;border:0.5px solid #e6e6e6;border-top:0.9px solid #d2d2d2'></div>
<div class='t' style='left:358.40px;top:220.34px;font:normal 5.2px/5.2px "Liberation Serif",serif;color:#151515;-webkit-text-stroke:0.05px #151515;letter-spacing:-0.12px'>Home Phone:</div>
<div class='b' style='left:415.20px;top:219.70px;width:124.80px;height:5.60px;background:#fff;border:0.5px solid #e6e6e6;border-top:0.9px solid #d2d2d2'></div>
<div class='t' style='left:358.40px;top:226.95px;font:normal 5.2px/5.2px "Liberation Serif",serif;color:#151515;-webkit-text-stroke:0.05px #151515;letter-spacing:-0.12px'>Email Address:</div>
<div class='b' style='left:415.20px;top:226.30px;width:124.80px;height:5.60px;background:#fff;border:0.5px solid #e6e6e6;border-top:0.9px solid #d2d2d2'></div>
<div class='t' style='left:358.40px;top:234.34px;font:normal 5.2px/5.2px "Liberation Serif",serif;color:#151515;-webkit-text-stroke:0.05px #151515;letter-spacing:-0.12px'>Qualified Hospital Stay?</div>
<div class='b' style='left:415.80px;top:234.90px;width:3.40px;height:3.40px;background:#fff;border:0.5px solid #888;border-radius:0.8px'></div>
<div class='b' style='left:358.00px;top:243.50px;width:235.00px;height:0.70px;background:#c9c9c9'></div>
<div class='b' style='left:449.00px;top:54.60px;width:114.60px;height:188.70px;background:#fff;border:0.6px solid #b9b9b9;border-top:none;box-shadow:-0.5px 1px 2px rgba(0,0,0,0.12)'></div>
<div class='b' style='left:560.00px;top:56.00px;width:2.20px;height:150.00px;background:#c1c1c1;border-radius:1px'></div>
<div class='t' style='left:485.70px;top:63.88px;font:normal 7.7px/7.7px "Liberation Sans",sans-serif;color:#5b626c;letter-spacing:-0.1px'>Paste Data</div>
<div class='b' style='left:456.00px;top:74.00px;width:95.50px;height:0.60px;background:#efefef'></div>
<div class='b' style='left:493.50px;top:80.20px;width:20.80px;height:10.40px;background:#5ea5e4;border-radius:0.8px'></div>
<div class='t' style='left:498.40px;top:84.04px;font:normal 4.2px/4.2px "Liberation Sans",sans-serif;color:#fff;transform:rotate(0.25deg);transform-origin:0 0;'>Paste</div>
<div class='t' style='left:481.80px;top:97.08px;font:normal 7.7px/7.7px "Liberation Sans",sans-serif;color:#5b626c;letter-spacing:-0.15px'>Data to Paste</div>
<div class='b' style='left:456.00px;top:106.80px;width:95.50px;height:0.60px;background:#efefef'></div>
<div class='b' style='left:449px;top:108px;width:111px;height:134.2px;overflow:hidden'>
<div class='t' style='left:6.6px;top:7.01px;font:4.6px/4.6px "Liberation Sans",sans-serif;color:#606060;letter-spacing:-0.08px'>First Name: Robert</div>
<div class='t' style='left:6.6px;top:15.34px;font:4.6px/4.6px "Liberation Sans",sans-serif;color:#606060;letter-spacing:-0.08px'>Middle Name: James</div>
<div class='t' style='left:6.6px;top:23.67px;font:4.6px/4.6px "Liberation Sans",sans-serif;color:#606060;letter-spacing:-0.08px'>Last Name: Jones</div>
<div class='t' style='left:6.6px;top:32.00px;font:4.6px/4.6px "Liberation Sans",sans-serif;color:#606060;letter-spacing:-0.08px'>Preferred Name: Bob</div>
<div class='t' style='left:6.6px;top:40.33px;font:4.6px/4.6px "Liberation Sans",sans-serif;color:#606060;letter-spacing:-0.08px'>Address: 12 East Ave</div>
<div class='t' style='left:6.6px;top:48.66px;font:4.6px/4.6px "Liberation Sans",sans-serif;color:#606060;letter-spacing:-0.08px'>address2:</div>
<div class='t' style='left:6.6px;top:56.99px;font:4.6px/4.6px "Liberation Sans",sans-serif;color:#606060;letter-spacing:-0.08px'>Sex: M</div>
<div class='t' style='left:6.6px;top:65.32px;font:4.6px/4.6px "Liberation Sans",sans-serif;color:#606060;letter-spacing:-0.08px'>date_of_birth: 09/09/1941</div>
<div class='t' style='left:6.6px;top:73.65px;font:4.6px/4.6px "Liberation Sans",sans-serif;color:#606060;letter-spacing:-0.08px'>Social Security Number: 111-11-1111</div>
<div class='t' style='left:6.6px;top:81.98px;font:4.6px/4.6px "Liberation Sans",sans-serif;color:#606060;letter-spacing:-0.08px'>City: Rochester</div>
<div class='t' style='left:6.6px;top:90.31px;font:4.6px/4.6px "Liberation Sans",sans-serif;color:#606060;letter-spacing:-0.08px'>State: New York</div>
<div class='t' style='left:6.6px;top:98.64px;font:4.6px/4.6px "Liberation Sans",sans-serif;color:#606060;letter-spacing:-0.08px'>Zip Code: 14526</div>
<div class='t' style='left:6.6px;top:106.97px;font:4.6px/4.6px "Liberation Sans",sans-serif;color:#606060;letter-spacing:-0.08px'>Email Address: bob@emai.com</div>
<div class='t' style='left:6.6px;top:115.30px;font:4.6px/4.6px "Liberation Sans",sans-serif;color:#606060;letter-spacing:-0.08px'>Home Phone: 555-555-5555</div>
<div class='t' style='left:6.6px;top:123.63px;font:4.6px/4.6px "Liberation Sans",sans-serif;color:#606060;letter-spacing:-0.08px'>Medicare Number: HIC82098025</div>
<div class='t' style='left:6.6px;top:131.96px;font:4.6px/4.6px "Liberation Sans",sans-serif;color:#606060;letter-spacing:-0.08px'>Insurance Name: Excellus</div>
</div>
<div class='b' style='left:0.00px;top:337.00px;width:640.00px;height:7.00px;background:linear-gradient(rgba(0,0,0,0),rgba(0,0,0,0.08))'></div>
<div class='b' style='left:0.00px;top:344.00px;width:640.00px;height:56.00px;background:#383838'></div>
<div class='b' style='left:0.00px;top:343.60px;width:640.00px;height:1.40px;background:#1c1010'></div>
<div class='t' style='left:25.00px;top:362.71px;font:bold 18.3px/18.3px "Liberation Sans",sans-serif;color:#fff;-webkit-text-stroke:0.35px #fff'>Single-click paste all data to the Destination HTML form</div>
<svg class='b' style='left:560.00px;top:320.00px;' width='80' height='80' viewBox='0 0 80 80'><path d='M58.91 13.99 A29.0 29.0 0 1 0 59.26 54.65 L47.34 46.06 A12.0 12.0 0 1 1 47.34 25.94 Z' fill='#1a75d6'/><g transform='translate(53.9 18.5) skewX(-21.3)'><path d='M-2.75 -9.15H2.75V-2.55H10.2V2.55H2.75V9.15H-2.75V2.55H-10.2V-2.55H-2.75Z' transform='translate(-3.0 2.2)' fill='#fff' stroke='#fff' stroke-width='5.0' stroke-linejoin='miter'/><path d='M-2.75 -9.15H2.75V-2.55H10.2V2.55H2.75V9.15H-2.75V2.55H-10.2V-2.55H-2.75Z' transform='translate(-2.0 1.47)' fill='#fff' stroke='#fff' stroke-width='5.0' stroke-linejoin='miter'/><path d='M-2.75 -9.15H2.75V-2.55H10.2V2.55H2.75V9.15H-2.75V2.55H-10.2V-2.55H-2.75Z' transform='translate(-1.0 0.73)' fill='#fff' stroke='#fff' stroke-width='5.0' stroke-linejoin='miter'/><path d='M-2.75 -9.15H2.75V-2.55H10.2V2.55H2.75V9.15H-2.75V2.55H-10.2V-2.55H-2.75Z' transform='translate(0 0)' fill='#fff' stroke='#fff' stroke-width='5.0' stroke-linejoin='miter'/><path d='M-2.75 -9.15H2.75V-2.55H10.2V2.55H2.75V9.15H-2.75V2.55H-10.2V-2.55H-2.75Z' transform='translate(-3.0 2.2)' fill='#8fd2ef'/><path d='M-2.75 -9.15H2.75V-2.55H10.2V2.55H2.75V9.15H-2.75V2.55H-10.2V-2.55H-2.75Z' transform='translate(-2.0 1.47)' fill='#8fd2ef'/><path d='M-2.75 -9.15H2.75V-2.55H10.2V2.55H2.75V9.15H-2.75V2.55H-10.2V-2.55H-2.75Z' transform='translate(-1.0 0.73)' fill='#8fd2ef'/><path d='M-2.75 -9.15H2.75V-2.55H10.2V2.55H2.75V9.15H-2.75V2.55H-10.2V-2.55H-2.75Z' fill='#1fa2dd'/></g></svg>
</div></body></html>
